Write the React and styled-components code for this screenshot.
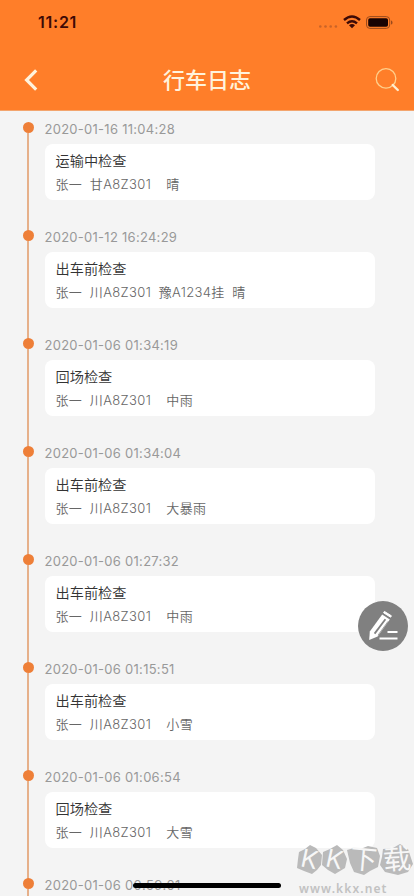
import React from 'react';
import styled, { createGlobalStyle } from 'styled-components';

const GlobalStyle = createGlobalStyle`
  * {
    box-sizing: border-box;
  }

  body {
    margin: 0;
    background: #f4f4f4;
    font-family: Inter, "Noto Sans CJK SC", sans-serif;
  }
`;

const Screen = styled.div`
  position: relative;
  width: 414px;
  height: 896px;
  overflow: hidden;
  background: #f4f4f4;
`;

const Header = styled.header`
  height: 111px;
  background: #ff7e29;
  border-bottom: 1px solid #f3a56e;
`;

const StatusBar = styled.div`
  display: flex;
  align-items: center;
  justify-content: space-between;
  height: 44px;
  padding: 0 20px 0 38px;
`;

const Clock = styled.span`
  color: #3d0a06;
  font-size: 16px;
  font-weight: 600;
  line-height: 20px;
  letter-spacing: 0.75px;
`;

const NavBar = styled.div`
  display: flex;
  align-items: center;
  justify-content: space-between;
  height: 66px;
  padding: 6px 14px 0 22px;
`;

const Title = styled.h1`
  margin: 0 8px 0 0;
  color: #fff3dc;
  font-size: 22px;
  font-weight: 500;
  line-height: 30px;
`;

const IconButton = styled.button`
  display: flex;
  width: 26px;
  padding: 0;
  border: 0;
  background: none;
`;

const Timeline = styled.ul`
  margin: 0;
  padding: 9px 0 0;
  list-style: none;
`;

const Item = styled.li`
  display: flex;
  height: 108px;
`;

const Rail = styled.div`
  display: flex;
  flex-direction: column;
  align-items: center;
  width: 12px;
  margin: 2px 5.5px 0 22px;
`;

const Dot = styled.div`
  flex: none;
  width: 11px;
  height: 11px;
  border-radius: 50%;
  background: #ee7f38;
`;

const Line = styled.div`
  flex: none;
  width: 2px;
  height: 99px;
  margin-bottom: -2px;
  background: #e6b08a;
`;

const Entry = styled.div`
  width: 330.5px;
  margin-left: 5px;
`;

const Time = styled.div`
  height: 24px;
  color: #999;
  font-size: 13px;
  line-height: 19px;
  letter-spacing: 0.27px;
  white-space: nowrap;
`;

const Card = styled.div`
  height: 56px;
  padding: 6px 11px 0;
  border-radius: 8px;
  background: #fff;
`;

const CardTitle = styled.div`
  color: #333;
  font-size: 14.2px;
  font-weight: 350;
  line-height: 22px;
`;

const Details = styled.div`
  display: flex;
  gap: 7.6px;
  margin-top: 2px;
  color: #666;
  font-size: 13px;
  font-weight: 350;
  line-height: 20px;
  letter-spacing: 0.36px;
  white-space: nowrap;
`;

const EditButton = styled.button`
  position: absolute;
  top: 601px;
  left: 358px;
  width: 50px;
  height: 50px;
  padding: 0;
  border: 0;
  border-radius: 50%;
  background: #808080;
`;

const HomeIndicator = styled.div`
  position: absolute;
  left: 133px;
  bottom: 8px;
  width: 148px;
  height: 5px;
  border-radius: 3px;
  background: #000;
`;

const Watermark = styled.div`
  position: absolute;
  top: 843px;
  left: 297px;
  width: 117px;
`;

const Stamps = styled.div`
  display: flex;
  height: 35px;
`;

const Stamp = styled.div`
  position: relative;
  width: ${props => props.$width}px;
  height: 34px;

  svg {
    display: block;
  }

  span {
    position: absolute;
    inset: 0;
    color: #f7f7f7;
    font-size: ${props => props.$size}px;
    font-weight: 400;
    line-height: 33px;
    text-align: center;
    transform: rotate(${props => props.$tilt}deg);
  }
`;

const Site = styled.div`
  padding-left: 2px;
  font-family: "Noto Sans", sans-serif;
  font-size: 12px;
  font-weight: 600;
  line-height: 22px;
  letter-spacing: 1.1px;
  color: #c2c2c2;
`;

const logs = [
  { time: '2020-01-16 11:04:28', type: '运输中检查', driver: '张一', plate: '甘A8Z301', trailer: '', weather: '晴' },
  { time: '2020-01-12 16:24:29', type: '出车前检查', driver: '张一', plate: '川A8Z301', trailer: '豫A1234挂', weather: '晴' },
  { time: '2020-01-06 01:34:19', type: '回场检查', driver: '张一', plate: '川A8Z301', trailer: '', weather: '中雨' },
  { time: '2020-01-06 01:34:04', type: '出车前检查', driver: '张一', plate: '川A8Z301', trailer: '', weather: '大暴雨' },
  { time: '2020-01-06 01:27:32', type: '出车前检查', driver: '张一', plate: '川A8Z301', trailer: '', weather: '中雨' },
  { time: '2020-01-06 01:15:51', type: '出车前检查', driver: '张一', plate: '川A8Z301', trailer: '', weather: '小雪' },
  { time: '2020-01-06 01:06:54', type: '回场检查', driver: '张一', plate: '川A8Z301', trailer: '', weather: '大雪' },
  { time: '2020-01-06 00:59:01' },
];

const stamps = [
  { text: 'K', width: 25, size: 25, tilt: 12, shape: '2,9 8,6 13,2 19,5 25,12 24,22 20,27 15,31 7,28 0,25 1,16' },
  { text: 'K', width: 25, size: 25, tilt: 12, shape: '1,9 8,6 15,2 21,7 25,16 23,25 18,28 13,31 6,27 0,22' },
  { text: '下', width: 33, size: 27, tilt: 5, shape: '0,7 7,5 16,5 21,3 30,5 33,13 31,24 23,28 17,32 7,29 3,20' },
  { text: '载', width: 34, size: 28, tilt: -4, shape: '3,6 13,5 20,1 28,6 30,12 33,21 28,29 18,32 5,29 0,22 2,14' },
];

const StatusIcons = () => (
  <svg width="76" height="20" viewBox="0 0 76 20" fill="none">
    <g fill="#c96328">
      <circle cx="2.3" cy="14.5" r="1.3" />
      <circle cx="7.5" cy="14.5" r="1.3" />
      <circle cx="12.7" cy="14.5" r="1.3" />
      <circle cx="17.9" cy="14.5" r="1.3" />
    </g>
    <g stroke="#3d0a06" strokeWidth="2.4">
      <path d="M26 8Q34 1 42 8" />
      <path d="M29 11.3Q34 7 39 11.3" />
    </g>
    <path d="M31 13.3Q34 10.9 37 13.3L34 16.2Z" fill="#3d0a06" />
    <rect x="48.5" y="4.6" width="23.2" height="11.8" rx="3.4" stroke="#9b4a1c" />
    <rect x="50.2" y="6.3" width="19.8" height="8.4" rx="1.8" fill="#180303" />
    <path d="M73 8.4C75 9 75 12 73 12.6Z" fill="#9b4a1c" />
  </svg>
);

const LogItem = ({ log }) => (
  <Item>
    <Rail>
      <Dot />
      <Line />
    </Rail>
    <Entry>
      <Time>{log.time}</Time>
      {log.type &&
        <Card>
          <CardTitle>{log.type}</CardTitle>
          <Details>
            <span>{log.driver}</span>
            <span>{log.plate}</span>
            <span>{log.trailer}</span>
            <span>{log.weather}</span>
          </Details>
        </Card>
      }
    </Entry>
  </Item>
);

const App = () => (
  <Screen>
    <GlobalStyle />
    <Header>
      <StatusBar>
        <Clock>11:21</Clock>
        <StatusIcons />
      </StatusBar>
      <NavBar>
        <IconButton aria-label="back">
          <svg width="26" height="26" viewBox="0 0 26 26" fill="none">
            <path d="M14.2 3.4L4.6 13L14.2 22.6" stroke="#fff3dc" strokeWidth="3.2" />
          </svg>
        </IconButton>
        <Title>行车日志</Title>
        <IconButton aria-label="search">
          <svg width="26" height="26" viewBox="0 0 26 26" fill="none">
            <circle cx="12" cy="11.4" r="9.8" stroke="#ffd08c" strokeWidth="1.3" />
            <path d="M18.7 18L23.8 23" stroke="#ffedcf" strokeWidth="2.4" strokeLinecap="round" />
          </svg>
        </IconButton>
      </NavBar>
    </Header>

    <Timeline>
      {logs.map(log => <LogItem key={log.time} log={log} />)}
    </Timeline>

    <EditButton aria-label="edit">
      <svg width="50" height="50" viewBox="0 0 50 50" fill="none">
        <path d="M26.4 10.4L33.4 14.8L32.6 16.2L25.6 11.8Z" fill="#fff" stroke="#fff" strokeLinejoin="round" />
        <path d="M24.2 13.6L31.8 18.4L19.6 35.6L11.2 39L11.8 30.6Z" fill="#fff" />
        <path d="M27.4 18.2L16.6 32.6" stroke="#808080" strokeWidth="1.8" />
        <path d="M30 20.4L20 34.2" stroke="#808080" strokeWidth="0.7" />
        <path d="M29.5 31H39.5M21.5 37.5H39.5" stroke="#fff" strokeWidth="2" />
      </svg>
    </EditButton>

    <Watermark>
      <Stamps>
        {stamps.map((stamp, i) => (
          <Stamp key={i} $width={stamp.width} $size={stamp.size} $tilt={stamp.tilt}>
            <svg width={stamp.width} height="34">
              <polygon points={stamp.shape} fill="#bababa" />
            </svg>
            <span>{stamp.text}</span>
          </Stamp>
        ))}
      </Stamps>
      <Site>www.kkx.net</Site>
    </Watermark>
    <HomeIndicator />
  </Screen>
);

export default App;
